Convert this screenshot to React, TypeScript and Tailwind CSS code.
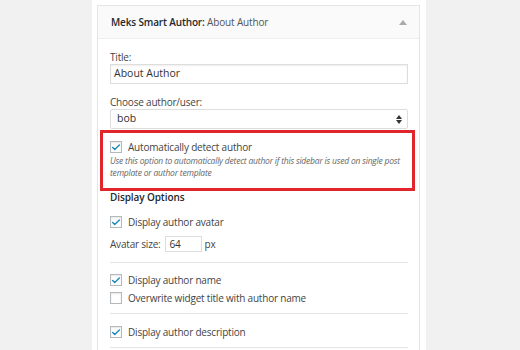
import { Check } from "lucide-react";

function Box({ checked }: { checked?: boolean }) {
  return (
    <span className="w-[12px] h-[12px] shrink-0 border border-[#b4b9be] bg-white shadow-[inset_0_1px_2px_rgba(0,0,0,0.1)] flex items-center justify-center">
      {checked && <Check className="w-[11px] h-[11px] text-[#1e8cbe]" strokeWidth={3.5} />}
    </span>
  );
}

function CheckRow({ label, checked }: { label: string; checked?: boolean }) {
  return (
    <div className="h-[14px] flex items-center gap-[6px]">
      <Box checked={checked} />
      <span className="text-[10px] tracking-[-0.2px] leading-[14px] text-[#444]">{label}</span>
    </div>
  );
}

function Divider({ className = "" }: { className?: string }) {
  return <div className={"h-px bg-[#e5e5e5] " + className} />;
}

export default function App() {
  return (
    <div
      className="w-[520px] h-[350px] bg-[#f1f1f1] flex overflow-hidden"
      style={{ fontFamily: '"Open Sans", "Noto Sans", sans-serif' }}
    >
      <div className="w-[92px] shrink-0" />
      <div className="w-[334px] shrink-0 bg-white pl-[5px] pt-[5px]">
        <div className="w-[323px] h-[400px] border border-[#e5e5e5] bg-white">
          <div className="h-[33px] bg-[#fafafa] border-b border-[#eeeeee] flex items-center justify-between pl-[13px] pr-[12px]">
            <span className="text-[10px] tracking-[-0.15px] text-[#23282d]">
              <span className="font-semibold">Meks Smart Author:</span>{" "}
              <span className="text-[#555]">About Author</span>
            </span>
            <span className="w-0 h-0 border-l-[4px] border-r-[4px] border-b-[5px] border-l-transparent border-r-transparent border-b-[#aaa]" />
          </div>

          <div className="pl-[12px] pr-[11px] pt-[11px]">
            <div className="text-[10px] tracking-[-0.2px] leading-[14px] text-[#444]">Title:</div>
            <div className="h-[20px] border border-[#ddd] shadow-[inset_0_1px_2px_rgba(0,0,0,0.07)] flex items-center px-[3px] text-[10.5px] text-[#333]">
              About Author
            </div>

            <div className="mt-[11px] text-[10px] tracking-[-0.2px] leading-[14px] text-[#444]">Choose author/user:</div>
            <div className="h-[20px] border border-[#ddd] rounded-[2px] flex items-center justify-between pl-[6px] pr-[5px] text-[10.5px] text-[#333]">
              <span>bob</span>
              <span className="flex flex-col gap-[1px]">
                <span className="w-0 h-0 border-l-[3px] border-r-[3px] border-b-[4px] border-l-transparent border-r-transparent border-b-[#333]" />
                <span className="w-0 h-0 border-l-[3px] border-r-[3px] border-t-[4px] border-l-transparent border-r-transparent border-t-[#333]" />
              </span>
            </div>

            <div className="mt-[1px] -ml-[10px] -mr-[7px] h-[61px] border-[3px] border-[#e0262b] pl-[7px] pr-[6px] pt-[7px]">
              <CheckRow label="Automatically detect author" checked />
              <p className="mt-[1px] text-[8.5px] tracking-[-0.2px] leading-[12px] italic text-[#666]">
                Use this option to automatically detect author if this sidebar is used on single post template or author template
              </p>
            </div>

            <div className="text-[10px] tracking-[-0.1px] leading-[12px] font-semibold text-[#23282d]">Display Options</div>

            <div className="mt-[12px]">
              <CheckRow label="Display author avatar" checked />
            </div>
            <div className="mt-[7px] h-[16px] flex items-center text-[10px] tracking-[-0.2px] text-[#444]">
              <span>Avatar size:</span>
              <span className="ml-[4px] w-[37px] h-[16px] border border-[#ddd] flex items-center px-[4px] text-[#333]">64</span>
              <span className="ml-[3px]">px</span>
            </div>
            <Divider className="mt-[10px]" />

            <div className="mt-[10px]">
              <CheckRow label="Display author name" checked />
            </div>
            <div className="mt-[4px]">
              <CheckRow label="Overwrite widget title with author name" />
            </div>
            <Divider className="mt-[8px]" />

            <div className="mt-[11px]">
              <CheckRow label="Display author description" checked />
            </div>
            <Divider className="mt-[8px]" />
          </div>
        </div>
      </div>
    </div>
  );
}
